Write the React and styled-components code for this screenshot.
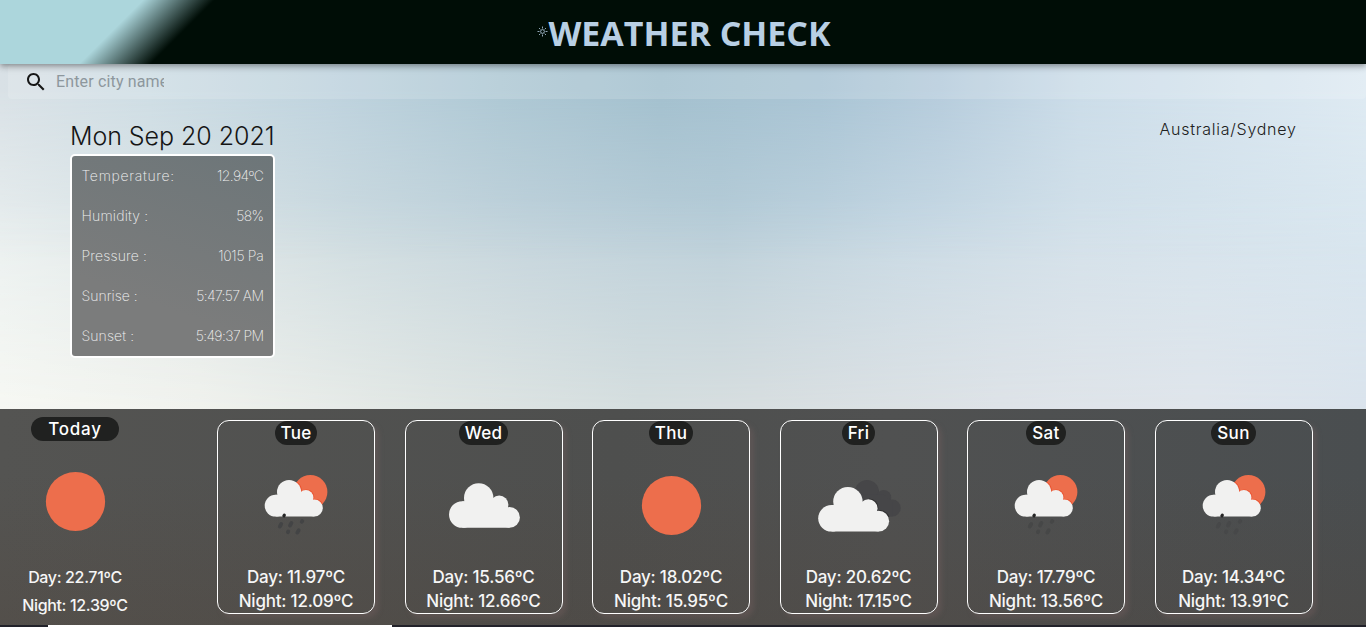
import React from 'react';
import styled, { createGlobalStyle } from 'styled-components';

const GlobalStyle = createGlobalStyle`
  * { box-sizing: border-box; }
  body { margin: 0; overflow: hidden; font-family: Inter, "Open Sans", sans-serif; }
`;

const Page = styled.div`
  position: relative;
  height: 627px;
  display: flex;
  flex-direction: column;
  overflow: hidden;
  isolation: isolate;
  background: linear-gradient(90deg, #f8f9f4 0, #f3f4ef 200px, #e3e8e5 430px, #d8e0e0 640px, #dbe0e1 760px, #e0e4e8 1000px, #e1e6ec 1200px, #dbe4ed 1366px);
  &::before, &::after {
    content: '';
    position: absolute;
    inset: 0 0 auto;
    height: 410px;
    z-index: -1;
  }
  &::before {
    background: linear-gradient(90deg, #e9efef 0, #dae3e5 200px, #cddbe0 350px, #c2d3dc 530px, #b9ced9 720px, #c7d9e4 900px, #d3e1ea 1080px, #d8e6ef 1366px);
    mask-image: linear-gradient(#000 200px, transparent 430px);
  }
  &::after {
    background: linear-gradient(90deg, #d9e1e6 0, #cedde4 150px, #bfd3de 330px, #aec8d4 500px, #a3c0ce 660px, #a9c4d4 820px, #b6ccdc 940px, #cbdce8 1080px, #d6e4ee 1240px, #deeaf2 1366px);
    mask-image: linear-gradient(#000 90px, transparent 260px);
  }
`;

const Header = styled.header`
  flex: none;
  height: 64px;
  display: flex;
  justify-content: center;
  align-items: center;
  padding: 2px 0 0 2px;
  background: linear-gradient(135deg, #acd6dc 10%, #000d06 15%);
  box-shadow: 0 2px 4px -1px rgba(0,0,0,.2), 0 4px 5px rgba(0,0,0,.14), 0 1px 10px rgba(0,0,0,.12);
  z-index: 1;
`;

const SunGlyph = styled.svg`
  width: 11px;
  height: 11px;
  margin-top: -3px;
`;

const Title = styled.h1`
  margin: 0;
  font: 700 34px/48px "Open Sans", sans-serif;
  letter-spacing: -0.02px;
  color: #b8cfe4;
  white-space: nowrap;
`;

const SearchBar = styled.label`
  flex: none;
  height: 35px;
  margin-left: 8px;
  padding-left: 16px;
  display: flex;
  align-items: center;
  border-radius: 4px;
  background: rgba(255,255,255,.15);
  svg { display: block; }
`;

const SearchInput = styled.input`
  width: 108px;
  margin-left: 8px;
  padding: 0;
  border: 0;
  outline: 0;
  background: none;
  font: 16px/20px Roboto, sans-serif;
  letter-spacing: .15px;
  &::placeholder { color: #8d979d; opacity: 1; }
`;

const Main = styled.main`
  flex: none;
  height: 310px;
  padding: 20px 70px 0;
  display: flex;
  justify-content: space-between;
  align-items: flex-start;
`;

const DateLine = styled.div`
  height: 35px;
  font-size: 25px;
  font-weight: 350;
  line-height: 35px;
  letter-spacing: -0.05px;
  color: #151515;
  white-space: nowrap;
`;

const Zone = styled.div`
  font-size: 16px;
  line-height: 20px;
  letter-spacing: .75px;
  margin-right: -0.65px;
  font-weight: 350;
  color: #202020;
`;

const Details = styled.dl`
  width: 205px;
  margin: 0;
  padding: 0 9px 0 9.5px;
  border: 2px solid #fff;
  border-radius: 5px;
  background: linear-gradient(200deg, #6d7679, #7b7c7c 70%);
`;

const Detail = styled.div`
  height: 40px;
  padding-bottom: 2px;
  display: flex;
  justify-content: space-between;
  align-items: center;
  font-size: 14px;
  font-weight: 200;
  color: #f2f2f2;
  dt, dd { margin: 0; }
  dt { letter-spacing: ${p => p.$l}px; }
  dd { letter-spacing: ${p => p.$r}px; margin-right: .6px; }
`;

const Strip = styled.section`
  flex: none;
  height: 216px;
  display: flex;
  background:
    linear-gradient(rgba(80,80,80,0) 30%, rgba(80,60,45,.2)),
    linear-gradient(90deg, #545452, #4e4f4e 45%, #505151 65%, #4a4e50);
`;

const Today = styled.div`
  width: 150px;
  margin-right: 67px;
  padding-top: 8px;
  display: flex;
  flex-direction: column;
  align-items: center;
`;

const TodayTemps = styled.div`
  padding-top: 2px;
  text-align: center;
`;

const Days = styled.div`
  display: flex;
  gap: 29.5px;
  padding-top: 11px;
`;

const Card = styled.article`
  width: 158px;
  height: 194px;
  display: flex;
  flex-direction: column;
  align-items: center;
  border: 1px solid #fff;
  border-radius: 12px;
  box-shadow: 4px 4px 5px rgba(115,95,95,.4);
`;

const Badge = styled.div`
  height: 24px;
  padding: 0 ${p => p.$pad || 6}px;
  border-radius: 15px;
  background: #202120;
  color: #fff;
  font-size: 17px;
  font-weight: 500;
  line-height: 24px;
  letter-spacing: ${p => p.$ls || 0.3}px;
`;

const Icon = styled.svg`
  display: block;
  width: 100px;
  height: 100px;
  margin: 10px 0;
  flex: none;
`;

const Temp = styled.div`
  font-size: ${p => p.$size || 17}px;
  font-weight: 500;
  line-height: ${p => p.$line || 24}px;
  letter-spacing: ${p => p.$ls ?? -0.22}px;
  color: #f6f6f6;
  white-space: nowrap;
`;

const Scrollbar = styled.div`
  flex: none;
  height: 2px;
  padding-left: 48px;
  background: #22222a;
  &::before { content: ''; display: block; width: 344px; height: 2px; background: #fff; }
`;

const Cloud = ({ color = '#f1f1f0', ...rest }) => (
  <g fill={color} {...rest}>
    <circle cx="13.3" cy="31.3" r="13.3" />
    <circle cx="29.7" cy="14.7" r="14.7" />
    <circle cx="50.2" cy="21.5" r="9.2" />
    <circle cx="60.5" cy="34.2" r="10.4" />
    <path d="M13.3 18H50L60.5 26V44.6H13.3Z" />
  </g>
);

function WeatherIcon({ kind, drop = '#434445' }) {
  return (
    <Icon viewBox="0 0 100 100" aria-hidden="true">
      {kind === 'sun' && <circle cx="50.5" cy="50.5" r="29.6" fill="#ed6e4c" />}
      {kind === 'cloud' && <Cloud transform="translate(15 28.2)" />}
      {kind === 'clouds' && (
        <>
          <Cloud color="#464648" transform="translate(33.6 25) scale(.82)" />
          <clipPath id="back-cloud"><path d="M46 24H92V62H60V40L46 31Z" /></clipPath>
          <g clipPath="url(#back-cloud)">
            <Cloud color="#303031" transform="translate(10 31.2)" />
          </g>
          <Cloud transform="translate(9.2 32)" />
        </>
      )}
      {kind === 'rain' && (
        <>
          <circle cx="64.4" cy="37" r="17" fill="#ed6e4c" />
          <clipPath id="sun-disc"><circle cx="64.4" cy="37" r="17" /></clipPath>
          <g clipPath="url(#sun-disc)">
            <Cloud color="#ea5330" transform="translate(19.6 24.4) scale(.82)" />
          </g>
          <Cloud transform="translate(18.7 25) scale(.82)" />
          <path d="M37.9 60.9L38.3 60.2" stroke="#252525" strokeWidth="3.2" strokeLinecap="round" />
          <path d="M33.8 71.6L35.2 69M44 70.6L45.4 68M55.8 66.8L56.3 66M41.8 77.2L42.2 76.5M51.3 77.6L52.7 75.2" stroke={drop} strokeWidth="3.8" strokeLinecap="round" />
        </>
      )}
    </Icon>
  );
}

const details = [
  ['Temperature:', '12.94ºC', 0.7, -0.55],
  ['Humidity :', '58%', 0.2, -0.6],
  ['Pressure :', '1015 Pa', 0.15, -0.3],
  ['Sunrise :', '5:47:57 AM', 0, -0.6],
  ['Sunset :', '5:49:37 PM', 0.1, -0.6],
];

const days = [
  { name: 'Tue', kind: 'rain', day: '11.97', night: '12.09' },
  { name: 'Wed', kind: 'cloud', day: '15.56', night: '12.66' },
  { name: 'Thu', kind: 'sun', day: '18.02', night: '15.95' },
  { name: 'Fri', kind: 'clouds', day: '20.62', night: '17.15' },
  { name: 'Sat', kind: 'rain', day: '17.79', night: '13.56', drop: '#464747' },
  { name: 'Sun', kind: 'rain', day: '14.34', night: '13.91', drop: '#474849' },
];

export default function App() {
  return (
    <Page>
      <GlobalStyle />
      <Header>
        <SunGlyph viewBox="0 0 11 11" fill="none" stroke="#b8cfe4" strokeWidth=".8">
          <circle cx="5.5" cy="5.5" r="1.9" />
          <path d="M5.5 .5v2M5.5 8.5v2M.5 5.5h2M8.5 5.5h2M2 2l1.4 1.4M7.6 7.6L9 9M9 2L7.6 3.4M3.4 7.6L2 9" />
        </SunGlyph>
        <Title>WEATHER CHECK</Title>
      </Header>
      <SearchBar>
        <svg width="24" height="24" viewBox="0 0 24 24" fill="#171717">
          <path d="M15.5 14h-.79l-.28-.27C15.41 12.59 16 11.11 16 9.5 16 5.91 13.09 3 9.5 3S3 5.91 3 9.5 5.91 16 9.5 16c1.61 0 3.09-.59 4.23-1.57l.27.28v.79l5 4.99L20.49 19l-4.99-5zm-6 0C7.01 14 5 11.99 5 9.5S7.01 5 9.5 5 14 7.01 14 9.5 11.99 14 9.5 14z" />
        </svg>
        <SearchInput placeholder="Enter city name" />
      </SearchBar>
      <Main>
        <div>
          <DateLine>Mon Sep 20 2021</DateLine>
          <Details>
            {details.map(([label, value, l, r]) => (
              <Detail key={label} $l={l} $r={r}><dt>{label}</dt><dd>{value}</dd></Detail>
            ))}
          </Details>
        </div>
        <Zone>Australia/Sydney</Zone>
      </Main>
      <Strip>
        <Today>
          <Badge $pad={17.5} $ls={0.8}>Today</Badge>
          <WeatherIcon kind="sun" />
          <TodayTemps>
            <Temp $size={16} $line={28} $ls={-0.35}>Day: 22.71ºC</Temp>
            <Temp $size={16} $line={28} $ls={-0.35}>Night: 12.39ºC</Temp>
          </TodayTemps>
        </Today>
        <Days>
          {days.map(d => (
            <Card key={d.name}>
              <Badge>{d.name}</Badge>
              <WeatherIcon kind={d.kind} drop={d.drop} />
              <Temp>Day: {d.day}ºC</Temp>
              <Temp>Night: {d.night}ºC</Temp>
            </Card>
          ))}
        </Days>
      </Strip>
      <Scrollbar />
    </Page>
  );
}
